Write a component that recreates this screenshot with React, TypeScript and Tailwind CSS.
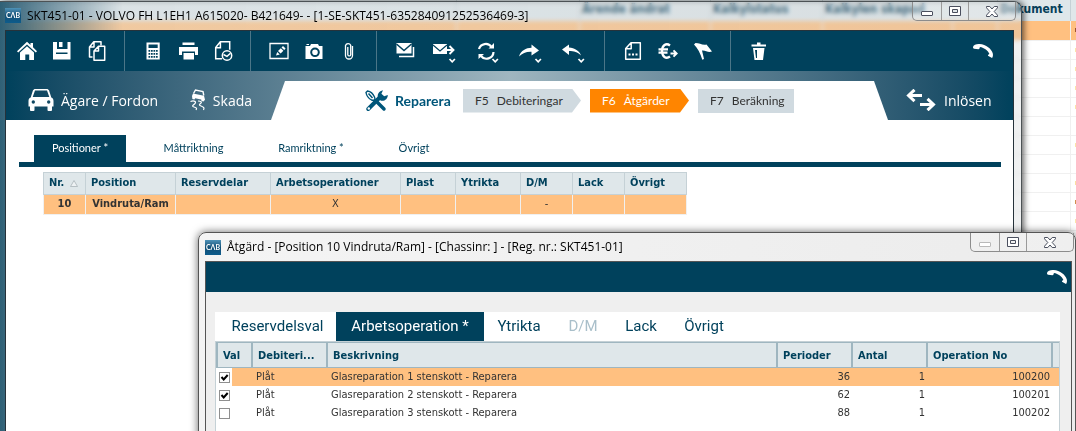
import type { ReactNode } from "react";
import clsx from "clsx";

interface IconProps {
  children: ReactNode;
  label?: string;
}

function Glyph({ children }: { children: ReactNode }) {
  return (
    <svg width="20" height="20" viewBox="0 0 20 20" fill="currentColor" aria-hidden="true">
      {children}
    </svg>
  );
}

function ToolButton({ children, label }: IconProps) {
  return (
    <button type="button" aria-label={label} className="flex h-10 w-[35px] items-center justify-center">
      <Glyph>{children}</Glyph>
    </button>
  );
}

function MenuButton({ children, label }: IconProps) {
  return (
    <button type="button" aria-label={label} className="flex h-10 w-[43px] items-center justify-center">
      <svg width="26" height="24" viewBox="0 0 26 24" fill="currentColor" aria-hidden="true">
        {children}
        <path d="m18.500 20 2.700 2.800 2.700-2.800" fill="none" stroke="currentColor" strokeWidth="1.700" />
      </svg>
    </button>
  );
}

function ToolGroup({ children, last }: { children: ReactNode; last?: boolean }) {
  return (
    <div className={clsx("flex pr-[10px]", !last && "mr-[10px] border-r border-[#4b7688]")}>{children}</div>
  );
}

function AppLogo() {
  return (
    <span className="flex h-[15px] w-4 items-center justify-center bg-linear-to-b from-[#4f93b8] via-[#125076] to-[#0d5c8c] font-['Lato',sans-serif] text-[7px] font-bold leading-none text-white">
      CΛB
    </span>
  );
}

function Phone() {
  return (
    <svg width="20" height="16" viewBox="0 0 20 16" fill="currentColor" aria-hidden="true">
      <path d="M0 4C.3 1.800 3.500.8 6.500 1c6.500.3 12.200 5 13.300 9.500.4 1.800 0 3.700-.8 4.500l-4-2.200c-.2-.9.4-1.500 1.400-1.900C15 7.500 11.500 4.600 6.800 3.900c.1 1.400-.4 2.100-1.300 2.300L1 5.800C.3 5.300-.1 4.700 0 4Z" />
    </svg>
  );
}

function WindowButtons({ dimmed }: { dimmed?: boolean }) {
  return (
    <div className="flex h-[19px] self-start rounded-b-[5px] border border-t-0 border-[#8c8c8c] bg-white/20 text-[#4a4f5e]">
      <button type="button" aria-label="Minimera" className="flex w-7 items-center justify-center">
        <svg width="12" height="12" viewBox="0 0 12 12" aria-hidden="true">
          <rect x=".5" y="6.500" width="11" height="4" rx=".5" fill="#fff" stroke={dimmed ? "#b9b9b9" : "currentColor"} />
        </svg>
      </button>
      <button type="button" aria-label="Maximera" className="flex w-7 items-center justify-center border-x border-[#9a9a9a]">
        <svg width="12" height="10" viewBox="0 0 12 10" aria-hidden="true">
          <path d="M.5.5h11v9H.5zM3.500 3.500v3h5v-3z" fill="#fff" fillRule="evenodd" stroke="currentColor" />
        </svg>
      </button>
      <button type="button" aria-label="Stäng" className="flex w-[46px] items-center justify-center">
        <svg width="12" height="11" viewBox="0 0 12 11" aria-hidden="true">
          <path d="M.5.5h3.300L6 3 8.200.5h3.300v1.300L8.200 5.500l3.300 3.700v1.300H8.200L6 8l-2.200 2.500H.5V9.200l3.300-3.700L.5 1.800z" fill="#fff" stroke="currentColor" />
        </svg>
      </button>
    </div>
  );
}

const listColumns = [
  { name: "", width: "w-[457px]" },
  { name: "", width: "w-[123px]" },
  { name: "Ärende ändrat", width: "w-[131px]" },
  { name: "Kalkylstatus", width: "w-[112px]" },
  { name: "Kalkylen skapad", width: "w-[130px]" },
  { name: "", width: "w-[45px]" },
  { name: "Dokument", width: "w-[73px]" },
  { name: "", width: "w-[20px]" },
];

// Colour of the status mark that ends each row of the case list
const listMarks = [
  "bg-[#a0522d]",
  "bg-[#fbe6a8]",
  "bg-[#fbe6a8]",
  "bg-[#fbe6a8]",
  "bg-[#fbe6a8]",
  "",
  "bg-[#fbe6a8]",
  "",
  "bg-[#fbe0a0]",
  "bg-[#cf8f4d]",
  "bg-[#fbe6a8]",
];

function CaseList() {
  return (
    <table className="w-[1091px] table-fixed border-collapse bg-white text-left">
      <thead>
        <tr className="h-[21px] bg-[#dfe7ea] text-[#06405a]">
          {listColumns.map((column, i) => (
            <th key={i} className={clsx("whitespace-nowrap border-r border-[#c5d1d6] p-0 pl-[2px] align-top text-[12px] leading-[18px]", column.width)}>
              {column.name}
            </th>
          ))}
        </tr>
      </thead>
      <tbody>
        {listMarks.map((mark, i) => (
          <tr key={i} className={clsx("h-[19px] border-b border-[#f0f0f0]", i === 0 && "bg-[#ffc080]")}>
            {listColumns.map((_, j) => (
              <td key={j} className="border-r border-[#f0f0f0] p-0 pl-1">
                {j === 7 && mark && <div className={clsx("h-1 w-2", mark)} />}
              </td>
            ))}
          </tr>
        ))}
      </tbody>
    </table>
  );
}

function Toolbar() {
  return (
    <div className="flex h-10 items-stretch bg-[#00415c] pl-[3px] text-white">
      <ToolGroup>
        <ToolButton label="Hem">
          <path d="M10 .8 13.500 4V2h2.500v4.300l4 3.900-1.200 1.300L10 3.500l-8.800 8L0 10.200z" />
          <path d="M10 5.200 17 11.500V19h-4.800v-5.500H8.300V19H3v-7.500z" />
        </ToolButton>
        <ToolButton label="Spara">
          <path d="M1 1h4v7h10.500V1H18.500v17.500H1zM4 11.500v1.500h11.500v-1.500zM7 1h3.500v5H7z" fillRule="evenodd" />
        </ToolButton>
        <ToolButton label="Kopiera">
          <g fill="none" stroke="currentColor" strokeWidth="1.500" strokeLinejoin="round">
            <path d="M5.500 16H2.500V6l4.300-5.200H14v3.700M7 .9V6H2.700" />
            <path d="m7 10 4.500-4.800h6.200V19.200H7zM11.500 5.500V10H7" />
          </g>
        </ToolButton>
      </ToolGroup>
      <ToolGroup>
        <ToolButton label="Kalkylator">
          <path d="M3.500 1.500h13.200v17H3.500zM5.500 3.500v3.500h9.200V3.500zM5.500 9v1.800h1.700V9zm2.500 0v1.800h1.700V9zm2.500 0v1.800h1.700V9zM13 9v1.800h1.700V9zm-7.500 3v1.800h1.700V12zM8 12v1.800h1.700V12zm2.500 0v1.800h1.700V12zm2.500 0v1.800h1.700V12zm-7.500 3v1.800h1.700V15zM8 15v1.800h1.700V15zm2.500 0v1.800h1.700V15zm2.500 0v1.800h1.700V15z" fillRule="evenodd" />
        </ToolButton>
        <ToolButton label="Skriv ut">
          <path d="M4.500 1.500h12V4h-12zM1 6h19v8h-3v-3.500H4V14H1zM5.500 12H16v6.500H5.500z" />
        </ToolButton>
        <ToolButton label="Historik">
          <g fill="none" stroke="currentColor" strokeWidth="1.500">
            <path d="M9 17.800H2.700V6.500L7.300.8h9.400v8M7.400 1v5.700H3" />
            <circle cx="14" cy="14.500" r="4.700" />
            <path d="m10.500 13.500 3.500 1.800 3.500-3" />
          </g>
        </ToolButton>
      </ToolGroup>
      <ToolGroup>
        <ToolButton label="Redigera">
          <path d="M1 2.500h18v15H1z" fill="none" stroke="currentColor" strokeWidth="1.300" />
          <path d="m7 14.500 1.200-3.600 2.600 2.500zM9 10l2.800-2.800 2.600 2.600-2.800 2.800zM12.500 6.400l1.500-1.500 2.600 2.600L15.200 9z" />
        </ToolButton>
        <ToolButton label="Kamera">
          <path d="M1.500 5H6l1-2h7l1 2h3.500v13h-17zM11 6.500a4.800 4.800 0 1 0 0 9.600 4.800 4.800 0 0 0 0-9.600Zm0 2a2.800 2.800 0 1 1 0 5.600 2.800 2.800 0 0 1 0-5.600ZM2.500 3h2.500v1H2.500z" fillRule="evenodd" />
        </ToolButton>
        <ToolButton label="Bifoga">
          <path d="M13.500 5v9.500a3.500 3.500 0 0 1-7 0V4.500a2.800 2.800 0 0 1 5.200-.2v9.500a1.500 1.500 0 0 1-2.900 0V6" fill="none" stroke="currentColor" strokeWidth="1.300" />
        </ToolButton>
      </ToolGroup>
      <ToolGroup>
        <ToolButton label="Meddelanden">
          <path d="M1.500 2h15v10.500h-15z" />
          <path d="m1.500 3 7.500 6.500L16.500 3" fill="none" stroke="#00415c" strokeWidth="1.500" />
          <path d="M4 15.500h14.500V6" fill="none" stroke="currentColor" strokeWidth="1.500" />
        </ToolButton>
        <MenuButton label="Skicka">
          <path d="M2 5h14v10H2z" />
          <path d="m2 6 7 6 7-6" fill="none" stroke="#00415c" strokeWidth="1.200" />
          <path d="M15 11h7m-3.500-4 4 4-4 4" fill="none" stroke="currentColor" strokeWidth="1.900" />
        </MenuButton>
        <MenuButton label="Uppdatera">
          <path d="M5 10a7 7 0 0 1 12.500-2M19.500 13A7 7 0 0 1 7 17" fill="none" stroke="currentColor" strokeWidth="2.200" />
          <path d="M14.500 9.500h5.500V4zM10 15H4.500v5z" />
        </MenuButton>
        <MenuButton label="Vidarebefordra">
          <path d="M2 17.500C4 11.500 9 9 14.500 8.800V5.500l7.500 6-7.500 5v-3.700C9.500 12.500 5.500 14 2 17.500Z" />
        </MenuButton>
        <MenuButton label="Svara">
          <path d="M21 16.500C19.500 12 14.500 9 9 8.600V5.500l-7 5 7 5.500V12c5 0 8.500 1 12 4.500Z" />
        </MenuButton>
      </ToolGroup>
      <ToolGroup>
        <ToolButton label="Kommentar">
          <path d="M2.700 7.500 8 1.800h9.300v16.400H2.700zM8.200 2v5.700H3" fill="none" stroke="currentColor" strokeWidth="1.500" strokeLinejoin="round" />
          <path d="M5.500 12.500h2v2h-2zm3.500 0h2v2H9zm3.500 0h2v2h-2z" />
        </ToolButton>
        <ToolButton label="Valuta">
          <path d="M12 4.500C8 1.500 4 4.500 4 10s4 8.500 8 5.500M.5 8.300h9.500M.5 11.700h9" fill="none" stroke="currentColor" strokeWidth="2.300" />
          <path d="M12.500 12.500h6m-3-3.200 3.200 3.200-3.200 3.200" fill="none" stroke="currentColor" strokeWidth="1.900" />
        </ToolButton>
        <ToolButton label="Flagga">
          <path d="M1 3.500 2.500 2c4 0 6.500 2.300 11 1.500l5.500 7c-4 1.500-6.500-1.500-10-1l2 8.500-1.700.7C7.500 12.500 4.500 7 1 3.500Z" />
        </ToolButton>
      </ToolGroup>
      <ToolGroup last>
        <ToolButton label="Ta bort">
          <path d="M2.500 3.500H8V1.500h3.500v2H17v2H2.500zM4 7h11.500l-1.500 12H5.500zM6 9l1 8h1V9z" fillRule="evenodd" />
        </ToolButton>
      </ToolGroup>
      <button type="button" aria-label="Ring" className="ml-auto mr-5 flex items-center">
        <Phone />
      </button>
    </div>
  );
}

interface StepProps {
  name: string;
  shortcut: string;
  width: string;
  active?: boolean;
  last?: boolean;
}

function Step({ name, shortcut, width, active, last }: StepProps) {
  return (
    <button
      type="button"
      className={clsx(
        "flex h-6 items-center gap-2 whitespace-nowrap pl-3 font-['Lato','Open_Sans',sans-serif] text-[12px]",
        width,
        active ? "bg-[#ff8500] text-white" : "bg-[#d0dae0] text-[#333]",
        !last && "[clip-path:polygon(0_0,calc(100%-9px)_0,100%_50%,calc(100%-9px)_100%,0_100%)]",
      )}
    >
      <span>{shortcut}</span>
      <span>{name}</span>
    </button>
  );
}

function ProcessBar() {
  return (
    <nav className="flex h-[49px] bg-linear-to-r from-[#00415c] via-[#9fb6c0] to-[#00415c] font-['Open_Sans','Noto_Sans',sans-serif] text-[14px] text-white">
      <div className="flex w-[265px] items-center pl-[22px] pt-[9px]">
        <a href="#fordon" className="flex items-center gap-[7px]">
          <svg width="26" height="22" viewBox="0 0 26 22" fill="currentColor" aria-hidden="true">
            <path d="M6.500 0h13l1.500 1.200 2.300 7.300c1.500.7 2.200 1.800 2.200 3.500v5.500H24V21a.9.900 0 0 1-.9.900h-2.700a.9.900 0 0 1-.9-.9v-3.500h-13V21a.9.900 0 0 1-.9.900H2.900A.9.900 0 0 1 2 21v-3.500H.5V12c0-1.700.7-2.800 2.200-3.500L5 1.200zM7 1.500 4.700 8h16.600L19 1.500zM5.300 11.300a1.700 1.700 0 1 0 0 3.400 1.700 1.700 0 0 0 0-3.400Zm15.400 0a1.700 1.700 0 1 0 0 3.400 1.700 1.700 0 0 0 0-3.400Z" fillRule="evenodd" />
          </svg>
          Ägare / Fordon
        </a>
        <a href="#skada" className="ml-auto mr-[19px] flex items-center gap-[7px]">
          <svg width="16" height="22" viewBox="0 0 16 22" fill="none" stroke="currentColor" aria-hidden="true">
            <path d="m3.500 4.500 2-3.500 7.500 1.500.8 4" strokeWidth="1.400" />
            <path d="m3 4.500 11 2.300 1 4-1.500 1.700-2-.5-.3-1.500-6-1.200-.8 1.200-2-.5L2 7z" fill="currentColor" stroke="none" />
            <path d="M.5 12.500c4-1.500 6 .5 4.500 2s-4 2.500-1 3.500 3 1.500 2 3M8 12c3 0 4 1 3 2s-3 2 0 3 3.500 2 2.500 4" strokeWidth="1.200" />
          </svg>
          Skada
        </a>
      </div>
      <div className="mt-[10px] flex flex-1 items-center bg-white pl-[94px] [clip-path:polygon(14px_0,calc(100%-14px)_0,100%_100%,0_100%)]">
        <a href="#reparera" className="flex w-[98px] items-center gap-[7px] font-['Lato','Open_Sans',sans-serif] font-bold text-[#00567a]">
          <svg width="23" height="22" viewBox="0 0 23 22" className="shrink-0" aria-hidden="true">
            <path d="m19 19-7-7" stroke="#00567a" strokeWidth="3.500" strokeLinecap="round" />
            <path d="m3.200 19 11-11" stroke="#00567a" strokeWidth="4" strokeLinecap="round" />
            <path d="M13 7.500c-1-3.500 1-6.500 5-7.300l-1.600 3.600 2.800 2.500L22.800 5c0 3.700-3 6.500-7 5.700z" fill="#00567a" />
            <circle cx="3.800" cy="18.500" r="1.200" fill="#fff" />
            <path d="M2.500 1 1 2.500c.5 3 2 5.500 5.500 7.500l2 .5 1.500-1.500-.5-2C8 3.500 5.500 1.500 2.500 1Z" fill="#fff" stroke="#00567a" strokeWidth="1.400" />
            <path d="m3.500 3.500 4 4.500M9.500 9.500l3 3" stroke="#00567a" strokeWidth="1.500" />
          </svg>
          Reparera
        </a>
        <div className="flex gap-[9px]">
          <Step shortcut="F5" name="Debiteringar" width="w-[118px]" />
          <Step shortcut="F6" name="Åtgärder" width="w-[99px]" active />
          <Step shortcut="F7" name="Beräkning" width="w-24" last />
        </div>
      </div>
      <a href="#inlosen" className="flex w-[125px] items-center gap-2 pl-[18px] pt-[9px]">
        <svg width="30" height="22" viewBox="0 0 30 22" fill="none" stroke="currentColor" strokeWidth="3" aria-hidden="true">
          <path d="M16 6.500H2M8.500.8 2.500 6.500l6 5.700M14 15.500h14M21.500 9.800l6 5.700-6 5.700" />
        </svg>
        Inlösen
      </a>
    </nav>
  );
}

const positionColumns = [
  { name: "Nr.", value: "10", width: "w-[42px]" },
  { name: "Position", value: "Vindruta/Ram", width: "w-[90px]" },
  { name: "Reservdelar", value: "", width: "w-[95px]" },
  { name: "Arbetsoperationer", value: "X", width: "w-[130px]" },
  { name: "Plast", value: "", width: "w-[55px]" },
  { name: "Ytrikta", value: "", width: "w-[65px]" },
  { name: "D/M", value: "-", width: "w-[52px]" },
  { name: "Lack", value: "", width: "w-[52px]" },
  { name: "Övrigt", value: "", width: "w-[62px]" },
];

function PositionTable() {
  return (
    <table className="ml-[37px] mt-[5px] w-[643px] table-fixed border-collapse text-[11px] text-[#333]">
      <thead>
        <tr className="h-[22px] bg-[#dfe7ea] text-left text-[#00415c]">
          {positionColumns.map((column) => (
            <th key={column.name} className={clsx("whitespace-nowrap border border-[#c5d1d6] p-0 pl-[5px]", column.width)}>
              {column.name}
              {column.name === "Nr." && (
                <svg width="8" height="7" viewBox="0 0 8 7" className="ml-[6px] inline" aria-hidden="true">
                  <path d="m.5 6.500 3.500-6 3.500 6z" fill="#eef2f4" stroke="#aab4b8" strokeWidth=".8" />
                </svg>
              )}
            </th>
          ))}
        </tr>
      </thead>
      <tbody>
        <tr className="h-5 bg-[#ffc080] text-center">
          {positionColumns.map((column, i) => (
            <td key={column.name} className={clsx("whitespace-nowrap border border-t-0 border-[#f0f0f0] p-0", i < 2 && "font-bold")}>
              {column.value}
            </td>
          ))}
        </tr>
      </tbody>
    </table>
  );
}

function MainWindow() {
  return (
    <div className="absolute -bottom-2 left-0 right-[54px] top-px rounded-tr-lg border border-l-0 border-[#4c5255] shadow-[2px_0_6px_rgba(0,0,0,0.6)]">
      <div className="flex h-full flex-col rounded-tr-lg bg-linear-to-r from-[#2f6076] via-[#d4dbde]/35 via-12% to-[#ccd0d2]/30 pl-[5px] pr-[7px] backdrop-blur-[2px]">
        <div className="flex h-[28px] shrink-0 items-center gap-[6px] pb-px">
          <AppLogo />
          <h1 className="whitespace-nowrap font-['Open_Sans','Noto_Sans',sans-serif] text-[12px] text-black">
            SKT451-01 - VOLVO FH L1EH1 A615020- B421649- - [1-SE-SKT451-635284091252536469-3]
          </h1>
          <div className="-mr-[2px] ml-auto self-start">
            <WindowButtons />
          </div>
        </div>
        <main className="flex-1 border border-[#26323a] bg-white">
          <Toolbar />
          <ProcessBar />
          <div className="ml-[13px] mr-[12px] mt-[15px] flex h-8 border-b-[5px] border-[#00415c] pl-[15px] font-['Lato','Open_Sans',sans-serif] text-[11px] text-[#00415c]">
            <button type="button" className="w-[92px] bg-[#00415c] text-white">Positioner *</button>
            <button type="button" className="w-[135px]">Måttriktning</button>
            <button type="button" className="w-[100px]">Ramriktning *</button>
            <button type="button" className="w-[106px]">Övrigt</button>
          </div>
          <PositionTable />
        </main>
      </div>
    </div>
  );
}

const operations = [
  { description: "Glasreparation 1 stenskott - Reparera", periods: 36, count: 1, number: 100200, checked: true },
  { description: "Glasreparation 2 stenskott - Reparera", periods: 62, count: 1, number: 100201, checked: true },
  { description: "Glasreparation 3 stenskott - Reparera", periods: 88, count: 1, number: 100202, checked: false },
];

const operationColumns = [
  { name: "Val", width: "w-[35px]" },
  { name: "Debiteri...", width: "w-[75px]" },
  { name: "Beskrivning", width: "" },
  { name: "Perioder", width: "w-[75px]" },
  { name: "Antal", width: "w-[75px]" },
  { name: "Operation No", width: "w-[125px]" },
  { name: "", width: "w-[7px]" },
];

function OperationTable() {
  return (
    <table className="w-full table-fixed border-collapse text-[11px] text-[#333]">
      <thead>
        <tr className="h-[25px] bg-[#dfe7ea] text-left text-[#00415c]">
          {operationColumns.map((column) => (
            <th key={column.name} className={clsx("whitespace-nowrap border-y border-l-2 border-[#9fb6c0] p-0 pt-[2px]", column.name && "pl-[5px]", column.width)}>
              {column.name}
            </th>
          ))}
        </tr>
      </thead>
      <tbody>
        {operations.map((operation, i) => (
          <tr key={operation.number} className={clsx("h-[18px]", i === 0 && "bg-[#ffc080]")}>
            <td className="p-0">
              <div className="flex h-[18px] w-[15px] items-center bg-white pl-[2px]">
                <span className="relative flex">
                  <input
                    type="checkbox"
                    defaultChecked={operation.checked}
                    aria-label={operation.description}
                    className="peer size-[11px] appearance-none border border-[#8f8f8f] bg-white"
                  />
                  <svg viewBox="0 0 11 11" className="pointer-events-none absolute inset-0 hidden size-[11px] peer-checked:block" aria-hidden="true">
                    <path d="m2.500 5 2.200 2.500 4-4.500" fill="none" stroke="#000" strokeWidth="2" />
                  </svg>
                </span>
              </div>
            </td>
            <td className="p-0 pl-1">Plåt</td>
            <td className="p-0 pl-1">{operation.description}</td>
            <td className="p-0 pr-[2px] text-right">{operation.periods}</td>
            <td className="p-0 pr-[2px] text-right">{operation.count}</td>
            <td className="p-0 pr-[2px] text-right">{operation.number}</td>
            <td className="p-0" />
          </tr>
        ))}
      </tbody>
    </table>
  );
}

function OperationDialog() {
  return (
    <section className="absolute -bottom-2 left-[198px] right-0 top-[232px] flex flex-col rounded-t-lg border border-[#555] bg-linear-to-r from-[#f4f4f4] to-[#ececec] pl-[6px] pr-[3px] shadow-[0_0_8px_rgba(0,0,0,0.6)]">
      <div className="flex h-7 shrink-0 items-center gap-[6px]">
        <AppLogo />
        <h2 className="whitespace-nowrap font-['Open_Sans','Noto_Sans',sans-serif] text-[12px] text-black">
          Åtgärd - [Position 10 Vindruta/Ram] - [Chassinr: ] - [Reg. nr.: SKT451-01]
        </h2>
        <div className="-mr-[2px] ml-auto self-start">
          <WindowButtons dimmed />
        </div>
      </div>
      <div className="flex-1 border border-[#555] bg-[#efefef]">
        <div className="flex h-[30px] items-center justify-end bg-[#00415c] pr-1 text-white">
          <button type="button" aria-label="Ring">
            <Phone />
          </button>
        </div>
        <div className="ml-[9px] mr-[11px] mt-5 min-h-[130px] bg-white">
          <div className="flex h-[29px] font-['Roboto',sans-serif] text-[15px] text-[#00415c]">
            <button type="button" className="w-[121px] pl-1">Reservdelsval</button>
            <button type="button" className="w-[148px] bg-[#00415c] text-white">Arbetsoperation *</button>
            <button type="button" className="w-[70px]">Ytrikta</button>
            <button type="button" disabled className="w-[58px] text-[#a9bfca]">D/M</button>
            <button type="button" className="w-[58px]">Lack</button>
            <button type="button" className="w-[68px]">Övrigt</button>
          </div>
          <div className="min-h-[105px] border-x border-t border-[#c5d1d6]">
            <OperationTable />
          </div>
        </div>
      </div>
    </section>
  );
}

export default function App() {
  return (
    <div className="relative min-h-screen overflow-hidden bg-[#17475a] font-['DejaVu_Sans_Condensed','DejaVu_Sans',sans-serif]">
      <div className="flex h-screen justify-end overflow-hidden bg-white">
        <div className="-mr-[15px] shrink-0">
          <CaseList />
        </div>
      </div>
      <MainWindow />
      <OperationDialog />
    </div>
  );
}
